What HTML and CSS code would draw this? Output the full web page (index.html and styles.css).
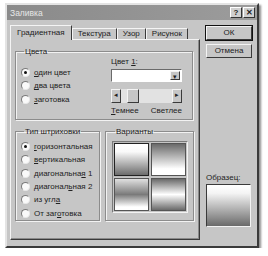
FILE: index.html
```html
<!DOCTYPE html>
<html lang="ru">
<head>
    <meta charset="UTF-8">
    <title>Заливка</title>
    <link rel="stylesheet" href="styles.css">
</head>
<body>
    <div class="dialog">
        <div class="titlebar">
            <span class="title">Заливка</span>
            <span class="tbtn">?</span>
            <span class="tbtn">✕</span>
        </div>
        <div class="main">
            <div class="left">
                <div class="tabs">
                    <span class="tab active">Градиентная</span>
                    <span class="tab">Текстура</span>
                    <span class="tab">Узор</span>
                    <span class="tab">Рисунок</span>
                </div>
                <div class="panel">
                    <fieldset class="group colors">
                        <legend>Цвета</legend>
                        <div class="radios">
                            <div class="radio"><span class="dot on"></span><span><u>о</u>дин цвет</span></div>
                            <div class="radio"><span class="dot"></span><span><u>д</u>ва цвета</span></div>
                            <div class="radio"><span class="dot"></span><span><u>з</u>аготовка</span></div>
                        </div>
                        <div class="colorpick">
                            <div class="lbl">Цвет <u>1</u>:</div>
                            <div class="combo"><span class="field"></span><span class="arrbtn">▾</span></div>
                            <div class="scroll">
                                <span class="arrbtn">◂</span>
                                <span class="track"><span class="thumb"></span></span>
                                <span class="arrbtn">▸</span>
                            </div>
                            <div class="ends"><span><u>Т</u>емнее</span><span>Светлее</span></div>
                        </div>
                    </fieldset>
                    <div class="lower">
                        <fieldset class="group hatch">
                            <legend>Тип штриховки</legend>
                            <div class="radio"><span class="dot on"></span><span><u>г</u>оризонтальная</span></div>
                            <div class="radio"><span class="dot"></span><span><u>в</u>ертикальная</span></div>
                            <div class="radio"><span class="dot"></span><span>диагональна<u>я</u> 1</span></div>
                            <div class="radio"><span class="dot"></span><span>диагонал<u>ь</u>ная 2</span></div>
                            <div class="radio"><span class="dot"></span><span>из угл<u>а</u></span></div>
                            <div class="radio"><span class="dot"></span><span>От заг<u>о</u>товка</span></div>
                        </fieldset>
                        <fieldset class="group variants">
                            <legend>Варианты</legend>
                            <div class="grid">
                                <span class="cell v1 sel"></span>
                                <span class="cell v2"></span>
                                <span class="cell v3"></span>
                                <span class="cell v4"></span>
                            </div>
                        </fieldset>
                    </div>
                </div>
            </div>
            <div class="right">
                <span class="btn default">ОК</span>
                <span class="btn">Отмена</span>
                <div class="sample">
                    <div class="lbl">Образец:</div>
                    <div class="samplebox"></div>
                </div>
            </div>
        </div>
    </div>
</body>
</html>
```

FILE: styles.css
```css
body {
    margin: 0;
    background: #fff;
    font-family: "Liberation Sans", Arial, sans-serif;
    font-size: 8px;
    color: #222;
}
u {
    text-decoration: underline;
}
.dialog {
    box-sizing: border-box;
    margin: 3px 0 0 5px;
    width: 254px;
    height: 245px;
    background: #c6c6c6;
    border: 2px solid;
    border-color: #e4e4e4 #3a3a3a #3a3a3a #e4e4e4;
    box-shadow: 2px 2px 2px rgba(0,0,0,0.45);
}
.titlebar {
    height: 15px;
    display: flex;
    align-items: center;
    gap: 1px;
    padding: 0 2px 0 3px;
    background: linear-gradient(to right, #8a8a8a, #9c9c9c);
}
.title {
    flex: 1;
    color: #e6e6e6;
    font-size: 8.5px;
}
.tbtn {
    box-sizing: border-box;
    width: 12px;
    height: 11px;
    background: #cfcfcf;
    border: 1px solid;
    border-color: #fff #333 #333 #fff;
    font-size: 8px;
    font-weight: bold;
    line-height: 9px;
    text-align: center;
}
.main {
    display: flex;
    padding: 5px 0 0 3px;
}
.tabs {
    display: flex;
    align-items: flex-end;
    height: 14px;
    position: relative;
    z-index: 1;
}
.tab {
    box-sizing: border-box;
    height: 11px;
    padding: 0 5px;
    line-height: 10px;
    border: 1px solid;
    border-bottom: none;
    border-color: #f4f4f4 #3a3a3a #3a3a3a #f4f4f4;
    background: #c6c6c6;
}
.tab.active {
    height: 15px;
    margin-bottom: -1px;
    padding: 0 6px;
    line-height: 13px;
}
.panel {
    box-sizing: border-box;
    width: 190px;
    height: 201px;
    border: 1px solid;
    border-color: #f4f4f4 #3a3a3a #3a3a3a #f4f4f4;
    box-shadow: inset -1px -1px 0 #8a8a8a;
    padding: 7px 0 0 4px;
}
.group {
    box-sizing: border-box;
    margin: 0;
    padding: 0;
    border: 1px solid #8c8c8c;
    box-shadow: 1px 1px 0 #f2f2f2, inset 1px 1px 0 #f2f2f2;
}
.group legend {
    padding: 0 1px;
    margin-left: 3px;
    line-height: 9px;
}
.colors {
    width: 178px;
    height: 73px;
    display: flex;
    justify-content: space-between;
    padding: 0 10px 0 5px;
}
.radios {
    padding-top: 10px;
}
.radio {
    display: flex;
    align-items: center;
    height: 13.3px;
    white-space: nowrap;
}
.dot {
    box-sizing: border-box;
    width: 9px;
    height: 9px;
    margin-right: 4px;
    border-radius: 50%;
    background: #fafafa;
    border: 1px solid;
    border-color: #7a7a7a #e8e8e8 #e8e8e8 #7a7a7a;
    display: flex;
    align-items: center;
    justify-content: center;
}
.dot.on::after {
    content: "";
    width: 3px;
    height: 3px;
    border-radius: 50%;
    background: #111;
}
.colorpick {
    width: 71px;
    padding-top: 1px;
}
.lbl {
    height: 10px;
    line-height: 10px;
}
.combo, .scroll {
    display: flex;
    box-sizing: border-box;
    height: 13px;
    margin-top: 2px;
}
.combo {
    border: 1px solid;
    border-color: #6a6a6a #fff #fff #6a6a6a;
    background: #fff;
    padding: 1px;
}
.field {
    flex: 1;
}
.arrbtn {
    box-sizing: border-box;
    width: 10px;
    background: #c6c6c6;
    border: 1px solid;
    border-color: #f4f4f4 #3a3a3a #3a3a3a #f4f4f4;
    font-size: 7px;
    line-height: 9px;
    text-align: center;
}
.scroll {
    margin-top: 7px;
    height: 14px;
}
.track {
    flex: 1;
    background: #e2e2e2;
    padding-left: 6px;
}
.thumb {
    display: block;
    box-sizing: border-box;
    width: 12px;
    height: 14px;
    background: #c6c6c6;
    border: 1px solid;
    border-color: #f4f4f4 #3a3a3a #3a3a3a #f4f4f4;
}
.ends {
    display: flex;
    justify-content: space-between;
    margin-top: 3px;
}
.lower {
    display: flex;
    gap: 5px;
    margin-top: 7px;
}
.hatch {
    width: 85px;
    height: 94px;
    padding: 4px 0 0 5px;
}
.variants {
    width: 89px;
    height: 94px;
    padding: 5px 0 0 6px;
}
.grid {
    box-sizing: border-box;
    width: 76px;
    height: 72px;
    display: grid;
    grid-template-columns: 1fr 1fr;
    gap: 2px;
    padding: 1px;
    border: 1px solid;
    border-color: #7a7a7a #f2f2f2 #f2f2f2 #7a7a7a;
}
.cell {
    border: 1px solid #555;
}
.cell.sel {
    border: 1px solid #222;
    box-shadow: 0 0 0 1px #bbb;
}
.v1 {
    background: linear-gradient(#fff, #fafafa 25%, #6c6c6c);
}
.v2 {
    background: linear-gradient(#6a6a6a, #fff 80%, #fff);
}
.v3 {
    background: linear-gradient(#e0e0e0, #7a7a7a 50%, #fff 90%);
}
.v4 {
    background: linear-gradient(#6a6a6a, #fff 50%, #6a6a6a);
}
.right {
    display: flex;
    flex-direction: column;
    align-items: flex-start;
    padding: 1px 0 0 6px;
}
.btn {
    box-sizing: border-box;
    width: 46px;
    height: 14px;
    margin-bottom: 4px;
    text-align: center;
    line-height: 12px;
    border: 1px solid;
    border-color: #f4f4f4 #3a3a3a #3a3a3a #f4f4f4;
}
.btn.default {
    outline: 1px solid #111;
}
.sample {
    margin-top: 111px;
}
.samplebox {
    box-sizing: border-box;
    width: 45px;
    height: 43px;
    margin-top: 1px;
    border: 1px solid;
    border-color: #3a3a3a #f2f2f2 #f2f2f2 #3a3a3a;
    background: linear-gradient(#fff, #f4f4f4 20%, #6a6a6a);
}
```
